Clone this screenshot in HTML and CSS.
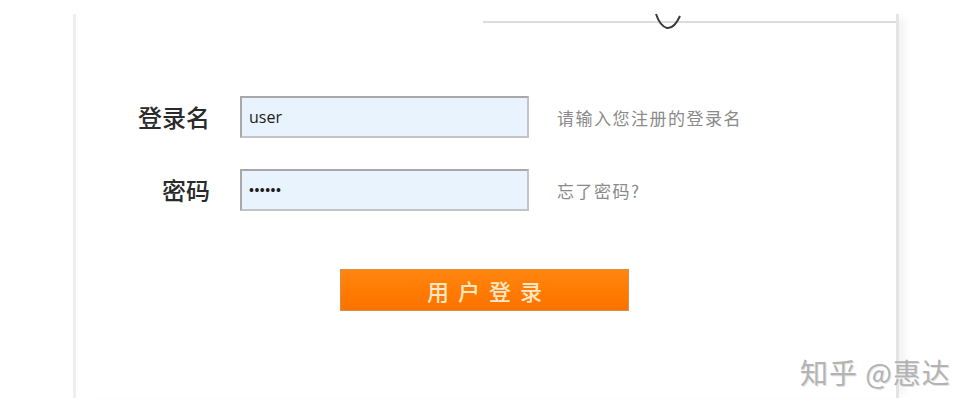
FILE: index.html
```html
<!DOCTYPE html>
<html lang="zh-CN">
<head>
<meta charset="utf-8">
<title>登录</title>
<link rel="stylesheet" href="styles.css">
</head>
<body>
<div class="card">
  <div class="topline"></div>
  <svg class="curve" width="32" height="20" viewBox="0 0 32 20"><path d="M3 1 Q7 13 14 15 Q21 16 27 3" fill="none" stroke="#3a3a3a" stroke-width="2"/></svg>
  <form class="form">
    <label class="label" for="user">登录名</label>
    <input class="field" id="user" type="text" value="user">
    <span class="hint">请输入您注册的登录名</span>
    <label class="label" for="pwd">密码</label>
    <input class="field dots" id="pwd" type="text" value="••••••">
    <span class="hint">忘了密码?</span>
  </form>
  <div class="actions">
    <button class="submit" type="button">用户登录</button>
  </div>
</div>
<div class="watermark">知乎 @惠达</div>
</body>
</html>
```
FILE: styles.css
```css
html, body {
  margin: 0;
  padding: 0;
  background: #fff;
}
body {
  width: 978px;
  height: 412px;
  overflow: hidden;
  position: relative;
  padding-top: 14px;
  box-sizing: border-box;
  font-family: "Noto Sans CJK SC", "Noto Sans", sans-serif;
}
.card {
  margin-left: 73px;
  width: 826px;
  height: 384px;
  padding-top: 7px;
  box-sizing: border-box;
  border-left: 3px solid #efefef;
  border-right: 3px solid #e4e4e4;
  box-shadow: 10px 0 8px -4px rgba(0, 0, 0, 0.05);
  position: relative;
}
.topline {
  margin-left: 407px;
  border-top: 2px solid #dcdcdc;
}
.curve {
  position: absolute;
  left: 577px;
  top: -1px;
}
.form {
  margin-top: 73px;
  display: grid;
  grid-template-columns: 164px 289px 1fr;
  row-gap: 31px;
  align-items: center;
}
.label {
  padding-right: 30px;
  text-align: right;
  font-size: 24px;
  font-weight: 500;
  color: #2a2a2a;
  line-height: 42px;
}
.field {
  box-sizing: border-box;
  width: 289px;
  height: 42px;
  margin: 0;
  border: 2px solid #a8a8a8;
  border-right-color: #c4c4c4;
  border-bottom-color: #c4c4c4;
  background: #e9f3fd;
  padding: 0 7px;
  font-family: "Open Sans", sans-serif;
  font-size: 16px;
  color: #1c1c1c;
  outline: none;
}
.dots {
  font-size: 13px;
  font-weight: bold;
  letter-spacing: 0.5px;
}
.hint {
  padding-left: 28px;
  font-size: 17px;
  letter-spacing: 1.5px;
  color: #8a8a8a;
}
.actions {
  margin: 58px 0 0 264px;
}
.submit {
  display: block;
  box-sizing: border-box;
  width: 289px;
  height: 42px;
  margin: 0;
  padding: 0 0 0 9px;
  border: 1px solid #d9904a;
  background: linear-gradient(#ff8612, #ff7a00 60%, #f87200);
  color: #fde7c4;
  font-family: "Noto Sans CJK SC", sans-serif;
  font-size: 22px;
  font-weight: 500;
  letter-spacing: 9px;
  cursor: pointer;
}
.watermark {
  position: absolute;
  left: 800px;
  top: 352px;
  font-family: "Noto Sans CJK SC", sans-serif;
  font-size: 28px;
  color: #b3b3b3;
  text-shadow: 1px 1px 0 #e2e2e2;
  letter-spacing: 1px;
}
```
